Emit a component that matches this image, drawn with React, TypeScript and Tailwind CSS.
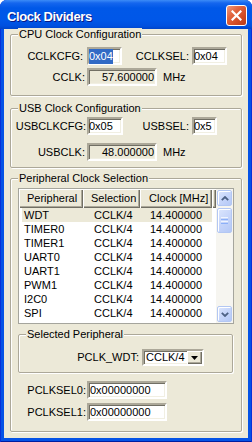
import React from "react"

const SUNKEN =
  "border-2 border-t-[#ACA899] border-l-[#ACA899] border-r-white border-b-white shadow-[inset_1px_1px_0_#716F64,inset_-1px_-1px_0_#F1EFE2]"
const RAISED =
  "bg-[#ECE9D8] shadow-[inset_1px_1px_0_#fff,inset_-1px_-1px_0_#716F64,inset_-2px_-2px_0_#ACA899]"
const XPBTN =
  "rounded-[2px] border border-[#B3C7F3] bg-[linear-gradient(135deg,#DCE6FD_0%,#C6D5FA_50%,#B4C8F6_100%)] shadow-[inset_1px_1px_0_#fff]"

function Group({ title, className, children }: { title: string; className: string; children: React.ReactNode }) {
  return (
    <div className={`relative rounded-[2px] border border-[#ACA899] shadow-[inset_1px_1px_0_#fff,1px_1px_0_#fff] ${className}`}>
      <span className="absolute left-[7px] -top-[7px] bg-[#ECE9D8] px-[1px] leading-[13px]">{title}</span>
      {children}
    </div>
  )
}

function Label({ className, children }: { className: string; children: React.ReactNode }) {
  return <span className={`text-right leading-[13px] ${className}`}>{children}</span>
}

function Field({ className, children }: { className: string; children: React.ReactNode }) {
  return <div className={`${SUNKEN} flex h-[18px] items-center leading-[13px] ${className}`}>{children}</div>
}

function Chevron({ up }: { up?: boolean }) {
  return (
    <svg width="8" height="5" viewBox="0 0 8 5">
      <polyline
        points={up ? "0.8,4.2 4,1 7.2,4.2" : "0.8,0.8 4,4 7.2,0.8"}
        fill="none"
        stroke="#4D6185"
        strokeWidth="1.8"
      />
    </svg>
  )
}

const rows = ["WDT", "TIMER0", "TIMER1", "UART0", "UART1", "PWM1", "I2C0", "SPI"]

export default function App() {
  return (
    <div className="h-[442px] w-[252px] bg-white font-['Liberation_Sans',Arial,sans-serif] text-[11px] text-black">
      <div className="flex h-full flex-col rounded-t-[7px] bg-[#0553E6] shadow-[inset_1px_0_0_#0831D9,inset_-1px_0_0_#0831D9,inset_0_-1px_0_#001EA0]">
        {/* Title bar */}
        <div className="flex h-[29px] items-center justify-between rounded-t-[7px] bg-[linear-gradient(#3C8CF7_0px,#1566EE_3px,#0058E8_8px,#0057E8_20px,#0050DF_26px,#0044C8_29px)] pl-[7px] pr-[5px]">
          <span className="mt-[4px] text-[13px] font-bold leading-[16px] tracking-[-0.4px] text-white [text-shadow:1px_1px_#0A1883]">
            Clock Dividers
          </span>
          <div className="flex h-[21px] w-[21px] items-center justify-center rounded-[3px] border border-white bg-[linear-gradient(135deg,#EE9A7E_0%,#E2653F_35%,#CF4A24_70%,#B83B18_100%)] mt-[2px]">
            <svg width="11" height="11" viewBox="0 0 11 11">
              <path d="M1.5 1.5 L9.5 9.5 M9.5 1.5 L1.5 9.5" stroke="#fff" strokeWidth="2.2" strokeLinecap="square" />
            </svg>
          </div>
        </div>

        {/* Client area */}
        <div className="mx-[4px] mb-[4px] flex-1 bg-[#ECE9D8] px-[6px]">
          <Group title="CPU Clock Configuration" className="mt-[5px] h-[62px] pt-[12px]">
            <div className="flex h-[18px] items-center">
              <Label className="w-[76px] pr-[4px]">CCLKCFG:</Label>
              <Field className="w-[35px] bg-white pl-[0px]">
                <span className="bg-[#316AC5] py-[1px] text-white">0x04</span>
              </Field>
              <Label className="w-[70px] pr-[3px]">CCLKSEL:</Label>
              <Field className="w-[35px] bg-white">0x04</Field>
            </div>
            <div className="mt-[3px] flex h-[18px] items-center">
              <Label className="w-[76px] pr-[2px]">CCLK:</Label>
              <Field className="w-[70px] justify-end bg-[#ECE9D8] pr-[1px]">57.600000</Field>
              <span className="ml-[6px] leading-[13px]">MHz</span>
            </div>
          </Group>

          <Group title="USB Clock Configuration" className="mt-[12px] h-[60px] pt-[8px]">
            <div className="flex h-[18px] items-center">
              <Label className="w-[76px] pr-[1px]">USBCLKCFG:</Label>
              <Field className="w-[36px] bg-white">0x05</Field>
              <Label className="w-[69px] pr-[3px]">USBSEL:</Label>
              <Field className="w-[25px] bg-white">0x5</Field>
            </div>
            <div className="mt-[8px] flex h-[18px] items-center">
              <Label className="w-[76px] pr-[2px]">USBCLK:</Label>
              <Field className="w-[70px] justify-end bg-[#ECE9D8] pr-[1px]">48.000000</Field>
              <span className="ml-[6px] leading-[13px]">MHz</span>
            </div>
          </Group>

          <Group title="Peripheral Clock Selection" className="mt-[10px] h-[254px] pt-[9px]">
            {/* List view */}
            <div className="ml-[7px] flex h-[136px] w-[216px] border border-[#A5A59D] bg-white">
              <div className="w-[197px]">
                <div className="flex h-[19px] leading-[13px]">
                  <div className={`${RAISED} flex w-[64px] items-center pl-[8px]`}>Peripheral</div>
                  <div className={`${RAISED} flex w-[57px] items-center pl-[8px]`}>Selection</div>
                  <div className={`${RAISED} flex w-[72px] items-center pl-[9px]`}>Clock [MHz]</div>
                  <div className={`${RAISED} w-[4px]`} />
                </div>
                {rows.map((name, i) => (
                  <div
                    key={name}
                    className={`ml-[3px] flex h-[14px] w-[190px] items-center leading-[13px] ${i === 0 ? "bg-[#ECE9D8]" : ""}`}
                  >
                    <span className="w-[61px] pl-[2px]">{name}</span>
                    <span className="w-[57px] pl-[11px]">CCLK/4</span>
                    <span className="w-[72px] pr-[10px] text-right">14.400000</span>
                  </div>
                ))}
              </div>
              <div className="flex w-[17px] flex-col bg-[#F6F5F0]">
                <div className={`${XPBTN} mx-[1px] mt-[1px] flex h-[16px] items-center justify-center`}>
                  <Chevron up />
                </div>
                <div className={`${XPBTN} mx-[1px] mt-[2px] flex h-[25px] flex-col items-center justify-center gap-[1px]`}>
                  <div className="h-[1px] w-[7px] bg-[#EEF4FE]" />
                  <div className="h-[1px] w-[7px] bg-[#8CB0F8]" />
                  <div className="h-[1px] w-[7px] bg-[#EEF4FE]" />
                  <div className="h-[1px] w-[7px] bg-[#8CB0F8]" />
                </div>
                <div className="flex-1" />
                <div className={`${XPBTN} mx-[1px] mb-[1px] flex h-[16px] items-center justify-center`}>
                  <Chevron />
                </div>
              </div>
            </div>

            <Group title="Selected Peripheral" className="ml-[7px] mt-[10px] h-[39px] w-[215px] pt-[14px]">
              <div className="flex h-[17px] items-center">
                <Label className="w-[123px] pr-[3px]">PCLK_WDT:</Label>
                <div className={`${SUNKEN} flex h-[17px] w-[62px] items-center bg-white`}>
                  <span className="flex-1 pl-[2px] leading-[13px]">CCLK/4</span>
                  <div className={`${RAISED} flex h-full w-[15px] items-center justify-center`}>
                    <svg width="7" height="4" viewBox="0 0 7 4">
                      <path d="M0 0 H7 L3.5 4 Z" fill="#000" />
                    </svg>
                  </div>
                </div>
              </div>
            </Group>

            <div className="mt-[8px] flex h-[18px] items-center">
              <Label className="w-[76px] pr-[1px]">PCLKSEL0:</Label>
              <Field className="w-[80px] bg-white pl-[1px]">0x00000000</Field>
            </div>
            <div className="mt-[4px] flex h-[18px] items-center">
              <Label className="w-[76px] pr-[1px]">PCLKSEL1:</Label>
              <Field className="w-[80px] bg-white pl-[1px]">0x00000000</Field>
            </div>
          </Group>
        </div>
      </div>
    </div>
  )
}
